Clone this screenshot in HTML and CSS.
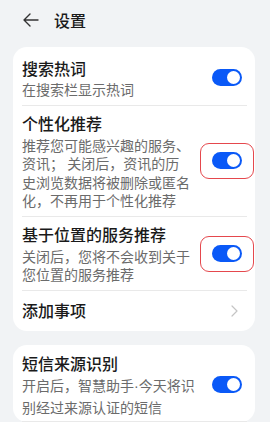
FILE: index.html
```html
<!DOCTYPE html>
<html lang="zh-CN">
<head>
<meta charset="utf-8">
<link rel="stylesheet" href="styles.css">
</head>
<body>
<div class="page">
  <header class="header">
    <svg class="back" width="16" height="14" viewBox="0 0 16 14"><path d="M7 1 L1 7 L7 13 M1 7 H15" fill="none" stroke="#333" stroke-width="1.4" stroke-linecap="round" stroke-linejoin="round"/></svg>
    <span class="title">设置</span>
  </header>

  <section class="card card-a">
    <div class="row">
      <div class="text">
        <div class="name">搜索热词</div>
        <div class="desc">在搜索栏显示热词</div>
      </div>
      <span class="toggle"><span class="knob"></span></span>
    </div>
    <div class="row">
      <div class="text">
        <div class="name">个性化推荐</div>
        <div class="desc">推荐您可能感兴趣的服务、<br>资讯； 关闭后，资讯的历<br>史浏览数据将被删除或匿名<br>化，不再用于个性化推荐</div>
      </div>
      <span class="toggle marked"><span class="knob"></span></span>
    </div>
    <div class="row">
      <div class="text">
        <div class="name">基于位置的服务推荐</div>
        <div class="desc">关闭后，您将不会收到关于<br>您位置的服务推荐</div>
      </div>
      <span class="toggle marked"><span class="knob"></span></span>
    </div>
    <div class="row row-link">
      <div class="name">添加事项</div>
      <svg class="chev" width="7" height="12" viewBox="0 0 7 12"><path d="M1 1 L6 6 L1 11" fill="none" stroke="#c4c4c4" stroke-width="1.2" stroke-linecap="round" stroke-linejoin="round"/></svg>
    </div>
  </section>

  <section class="card card-b">
    <div class="row">
      <div class="text">
        <div class="name">短信来源识别</div>
        <div class="desc wide">开启后，智慧助手<span class="dot">·</span>今天将识<br>别经过来源认证的短信</div>
      </div>
      <span class="toggle"><span class="knob"></span></span>
    </div>
  </section>
</div>
</body>
</html>
```

FILE: styles.css
```css
* { box-sizing: border-box; }
html, body { margin: 0; padding: 0; }
body {
  background: #f1f3f5;
  font-family: "Noto Sans CJK SC", "Noto Sans", sans-serif;
  color: #1a1a1a;
  width: 270px;
  height: 422px;
  overflow: hidden;
}
.page { padding: 0 15px 0 13px; }
.header {
  height: 38px;
  display: flex;
  align-items: center;
  padding: 2px 0 0 10px;
}
.back { display: block; }
.title {
  margin-left: 15px;
  font-size: 16px;
  font-weight: 500;
  line-height: 22px;
}
.card {
  background: #fff;
  border-radius: 14px;
  padding: 3.5px 8px 0 9px;
  margin-top: 9px;
}
.card-b { margin-top: 14px; padding-top: 0.5px; }
.row {
  display: flex;
  align-items: center;
  justify-content: space-between;
  padding: 6px 0 6.5px;
  border-bottom: 1px solid #e9e9e9;
}
.row:last-child { border-bottom: none; }
.card-b .row:last-child { border-bottom: 1px solid #e9e9e9; padding-bottom: 3px; }
.name {
  font-size: 16px;
  font-weight: 500;
  line-height: 23.5px;
  color: #1a1a1a;
}
.desc {
  font-size: 14px;
  line-height: 18.5px;
  color: #6b6b6b;
}
.desc.wide { line-height: 21px; }
.dot { font-family: "Liberation Sans", sans-serif; }
.row-link { height: 40px; padding: 0; }
.chev { margin-right: 9px; }
.toggle {
  position: relative;
  flex: none;
  width: 30px;
  height: 17px;
  border-radius: 9px;
  background: #0a59f7;
  margin-right: 5px;
  display: flex;
  align-items: center;
  justify-content: flex-end;
  padding-right: 2px;
}
.knob {
  width: 13px;
  height: 13px;
  border-radius: 50%;
  background: #fff;
}
.toggle.marked::after {
  content: "";
  position: absolute;
  left: -12px;
  right: -12px;
  top: -9px;
  bottom: -10px;
  border: 1.5px solid #e5484d;
  border-radius: 9px;
}
```
